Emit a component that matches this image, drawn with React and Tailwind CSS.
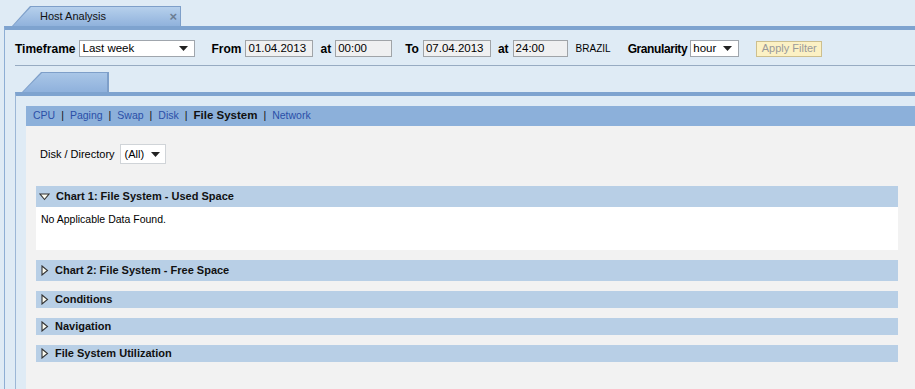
import React from "react";

const Collapsed = () => (
  <svg width="8" height="11" viewBox="0 0 8 11" className="shrink-0">
    <path d="M1 1 L6.5 5.5 L1 10 Z" fill="#fbfbf0" stroke="#333" strokeWidth="1.1" strokeLinejoin="miter" />
  </svg>
);

const Expanded = () => (
  <svg width="11" height="8" viewBox="0 0 11 8" className="shrink-0">
    <path d="M1 1 L10 1 L5.5 6.5 Z" fill="#fbfbf0" stroke="#333" strokeWidth="1.1" />
  </svg>
);

const Arrow = () => (
  <svg width="9" height="5" viewBox="0 0 9 5">
    <path d="M0 0 L9 0 L4.5 5 Z" fill="#222" />
  </svg>
);

function Section({ title, h = "h-[21px]", open }) {
  return (
    <div className={`${h} bg-[#b8cfe6] flex items-center gap-[6px] ${open ? "pl-[3px]" : "pl-[5px]"}`}>
      {open ? <Expanded /> : <Collapsed />}
      <span className="font-bold text-[11px] text-[#111]">{title}</span>
    </div>
  );
}

export default function App() {
  const font = { fontFamily: '"Liberation Sans", Arial, sans-serif' };
  return (
    <div className="w-[915px] h-[389px] bg-[#dfebf5] overflow-hidden flex flex-col text-black" style={font}>
      {/* top tab strip */}
      <div className="h-[26px] flex items-end pl-[12px] shrink-0">
        <div className="relative w-[169px] h-[20px]">
          <div className="absolute inset-0 bg-[#7e9fc9] [clip-path:polygon(18px_0,100%_0,100%_100%,0_100%)]" />
          <div className="absolute left-[1px] top-[1px] right-[1px] bottom-0 bg-gradient-to-b from-[#b6d0ec] to-[#90b2dc] [clip-path:polygon(18px_0,100%_0,100%_100%,0_100%)] flex items-center">
            <span className="ml-[27px] text-[11px] text-[#111]">Host Analysis</span>
            <span className="ml-auto mr-[3px] text-[13px] font-bold text-[#6b7d92] leading-none">×</span>
          </div>
        </div>
      </div>
      {/* outer panel */}
      <div className="flex-1 ml-[4px] border-t-[4px] border-[#7ea3cf] border-l border-l-[#8eaed4] flex flex-col min-h-0">
        {/* filter row */}
        <div className="h-[35px] shrink-0 flex items-center pl-[10px] pt-[2px] text-[12px]">
          <span className="font-bold">Timeframe</span>
          <div className="ml-[4px] w-[116px] h-[17px] bg-white border border-[#a0a6ad] flex items-center justify-between pl-[2px] pr-[6px]">
            <span className="text-[11.5px]">Last week</span>
            <Arrow />
          </div>
          <span className="ml-[16px] font-bold">From</span>
          <div className="ml-[4px] w-[68px] h-[17px] bg-[#eff0f1] border border-[#a0a4a8] flex items-center pl-[2px] text-[11.5px]">01.04.2013</div>
          <span className="ml-[7px] font-bold">at</span>
          <div className="ml-[4px] w-[57px] h-[17px] bg-[#eff0f1] border border-[#a0a4a8] flex items-center pl-[2px] text-[11.5px]">00:00</div>
          <span className="ml-[13px] font-bold">To</span>
          <div className="ml-[4px] w-[68px] h-[17px] bg-[#eff0f1] border border-[#a0a4a8] flex items-center pl-[2px] text-[11.5px]">07.04.2013</div>
          <span className="ml-[7px] font-bold">at</span>
          <div className="ml-[4px] w-[55px] h-[17px] bg-[#eff0f1] border border-[#a0a4a8] flex items-center pl-[2px] text-[11.5px]">24:00</div>
          <span className="ml-[8px] text-[10px]">BRAZIL</span>
          <span className="ml-[17px] font-bold tracking-[-0.4px]">Granularity</span>
          <div className="ml-[3px] w-[49px] h-[17px] bg-white border border-[#a0a6ad] flex items-center justify-between pl-[2px] pr-[6px]">
            <span className="text-[11.5px]">hour</span>
            <Arrow />
          </div>
          <div className="ml-[17px] w-[66px] h-[16px] bg-[#fcf1c4] border border-[#cdbf8e] flex items-center justify-center text-[11px] text-[#9a9a9a]">Apply Filter</div>
        </div>
        {/* separator */}
        <div className="ml-[10px] h-px bg-[#97abc2] shrink-0" />
        {/* inner tab strip */}
        <div className="h-[26px] shrink-0 flex items-end pl-[17px]">
          <div className="relative w-[87px] h-[20px]">
            <div className="absolute inset-0 bg-[#7e9fc9] [clip-path:polygon(19px_0,100%_0,100%_100%,0_100%)]" />
            <div className="absolute left-[1px] top-[1px] right-[2px] bottom-0 bg-gradient-to-b from-[#a9c6e7] to-[#8fb1dc] [clip-path:polygon(19px_0,100%_0,100%_100%,0_100%)]" />
          </div>
        </div>
        {/* inner panel */}
        <div className="flex-1 ml-[10px] border-t-[4px] border-[#7ea3cf] border-l border-l-[#9cb7d6] flex flex-col pl-[10px] pt-[10px] min-h-0">
          <div className="h-[20px] shrink-0 bg-[#8cb0da] flex items-center pl-[7px] text-[10.5px] gap-[6px]">
            <span className="text-[#2a4fa8]">CPU</span>
            <span className="text-[#111]">|</span>
            <span className="text-[#2a4fa8]">Paging</span>
            <span className="text-[#111]">|</span>
            <span className="text-[#2a4fa8]">Swap</span>
            <span className="text-[#111]">|</span>
            <span className="text-[#2a4fa8]">Disk</span>
            <span className="text-[#111]">|</span>
            <span className="font-bold text-[11.5px] text-[#111]">File System</span>
            <span className="text-[#111]">|</span>
            <span className="text-[#2a4fa8]">Network</span>
          </div>
          <div className="flex-1 bg-[#f2f2f2] pl-[10px] pr-[17px] flex flex-col">
            <div className="mt-[18px] h-[20px] flex items-center pl-[4px]">
              <span className="text-[11px]">Disk / Directory</span>
              <div className="ml-[5px] w-[46px] h-[20px] bg-white border border-[#d0d4d8] flex items-center justify-between pl-[4px] pr-[5px]">
                <span className="text-[11px]">(All)</span>
                <Arrow />
              </div>
            </div>
            <div className="mt-[22px]">
              <Section title="Chart 1: File System - Used Space" open />
              <div className="h-[43px] bg-white pl-[5px] pt-[5px] text-[10.5px]">No Applicable Data Found.</div>
            </div>
            <div className="mt-[10px]"><Section title="Chart 2: File System - Free Space" /></div>
            <div className="mt-[10px]"><Section title="Conditions" h="h-[17px]" /></div>
            <div className="mt-[10px]"><Section title="Navigation" h="h-[17px]" /></div>
            <div className="mt-[10px]"><Section title="File System Utilization" h="h-[17px]" /></div>
          </div>
        </div>
      </div>
    </div>
  );
}
